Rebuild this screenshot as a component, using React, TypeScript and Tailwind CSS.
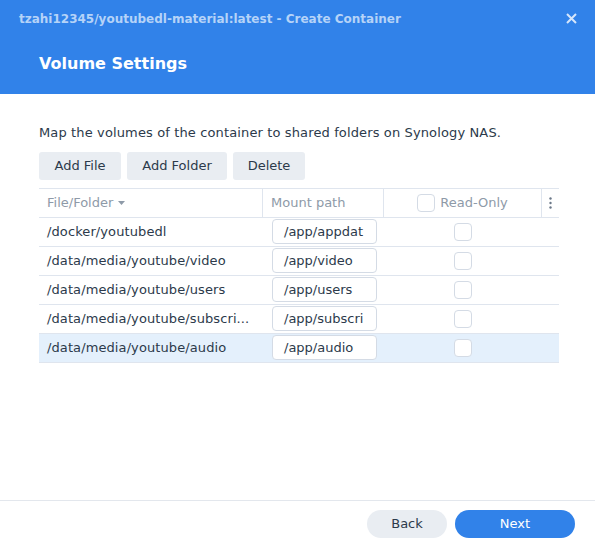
import React from 'react';

const rows = [
  { path: '/docker/youtubedl', mount: '/app/appdat' },
  { path: '/data/media/youtube/video', mount: '/app/video' },
  { path: '/data/media/youtube/users', mount: '/app/users' },
  { path: '/data/media/youtube/subscri...', mount: '/app/subscri' },
  { path: '/data/media/youtube/audio', mount: '/app/audio', selected: true },
];

function Box() {
  return <div className="h-[18px] w-[18px] rounded-[4px] border border-[#d4dbe5] bg-white" />;
}

export default function App() {
  return (
    <div className="flex h-[544px] w-[595px] flex-col bg-white text-[13px] text-[#2c3a4b]" style={{ fontFamily: '"DejaVu Sans", Verdana, sans-serif' }}>
      <div className="h-[94px] bg-[#3182e9]">
        <div className="flex h-[37px] items-center justify-between pl-[19px] pr-[18px]">
          <span className="text-[12px] font-bold text-[#b5d3f8]">tzahi12345/youtubedl-material:latest - Create Container</span>
          <svg width="11" height="11" viewBox="0 0 11 11">
            <path d="M1 1L10 10M10 1L1 10" stroke="#d6e6fb" strokeWidth="2" />
          </svg>
        </div>
        <div className="pl-[39px] pt-[15px] text-[16px] font-bold text-white">Volume Settings</div>
      </div>

      <div className="flex-1 px-[39px] pt-[29px]">
        <div className="tracking-[0.13px] text-[#2c3a4b]">Map the volumes of the container to shared folders on Synology NAS.</div>
        <div className="mt-[9px] flex gap-[6px]">
          <button className="h-[28px] w-[82px] rounded-[3px] bg-[#e9edf2]">Add File</button>
          <button className="h-[28px] w-[100px] rounded-[3px] bg-[#e9edf2]">Add Folder</button>
          <button className="h-[28px] w-[72px] rounded-[3px] bg-[#e9edf2]">Delete</button>
        </div>

        <div className="mt-[8px] w-[520px] border-t border-[#dfe5ee]">
          <div className="flex h-[29px] items-center border-b border-[#dfe5ee] text-[#8e9aa8]">
            <div className="flex w-[224px] items-center gap-[5px] self-stretch border-r border-[#dfe5ee] pl-[8px]">
              File/Folder
              <svg width="7" height="4" viewBox="0 0 7 4"><path d="M0 0H7L3.5 4Z" fill="#8e9aa8" /></svg>
            </div>
            <div className="flex w-[121px] items-center self-stretch border-r border-[#dfe5ee] pl-[8px]">Mount path</div>
            <div className="flex w-[158px] items-center justify-center gap-[5px] self-stretch border-r border-[#dfe5ee]">
              <Box />
              Read-Only
            </div>
            <div className="flex flex-1 justify-center">
              <svg width="3" height="12" viewBox="0 0 3 12">
                <circle cx="1.5" cy="1.5" r="1.2" fill="#6b7888" />
                <circle cx="1.5" cy="6" r="1.2" fill="#6b7888" />
                <circle cx="1.5" cy="10.5" r="1.2" fill="#6b7888" />
              </svg>
            </div>
          </div>
          {rows.map((r) => (
            <div key={r.path} className={`flex h-[29px] items-center border-b border-[#dfe5ee] ${r.selected ? 'bg-[#e4f0fc]' : ''}`}>
              <div className="w-[224px] truncate pl-[8px] tracking-[0.1px]">{r.path}</div>
              <div className="w-[121px] pl-[9px]">
                <div className="flex h-[25px] w-[105px] items-center overflow-hidden whitespace-nowrap rounded-[4px] border border-[#d4dbe5] bg-white pl-[11px]">{r.mount}</div>
              </div>
              <div className="flex w-[158px] justify-center">
                <Box />
              </div>
            </div>
          ))}
        </div>
      </div>

      <div className="flex h-[44px] items-start justify-end gap-[8px] border-t border-[#e3e7ed] pr-[20px] pt-[9px]">
        <button className="h-[28px] w-[80px] rounded-full bg-[#e9edf2] text-[#2c3a4b]">Back</button>
        <button className="h-[28px] w-[120px] rounded-full bg-[#3182e9] text-white">Next</button>
      </div>
    </div>
  );
}
